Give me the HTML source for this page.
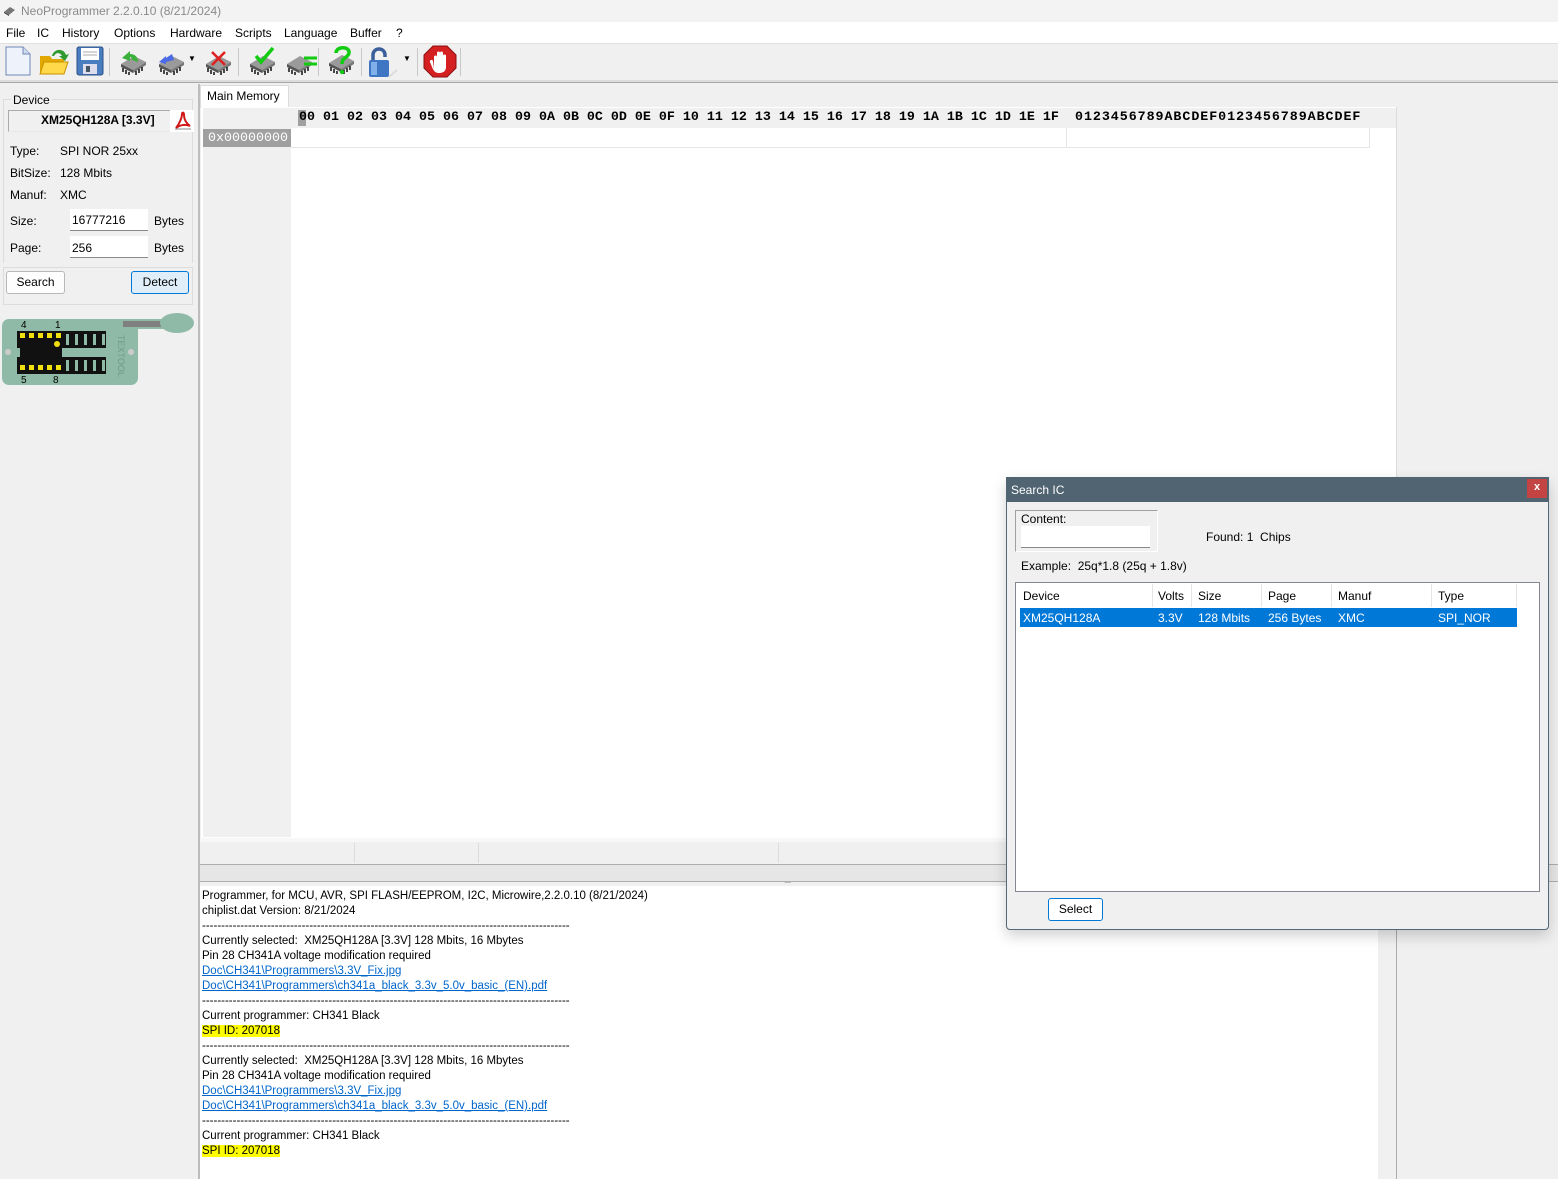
<!DOCTYPE html>
<html><head><meta charset="utf-8">
<style>
*{box-sizing:border-box;margin:0;padding:0}
body{width:1558px;height:1179px;overflow:hidden;background:#f0f0f0;font-family:"Liberation Sans",sans-serif;font-size:12px;color:#000;position:relative}
.a{position:absolute}
.t{position:absolute;white-space:nowrap}
.mono{font-family:"Liberation Mono",monospace;font-weight:bold;font-size:13.33px}
a{color:#0066cc;text-decoration:underline}
.sep{position:absolute;top:48px;width:1px;height:28px;background:#c8c8c8}
.btn{position:absolute;background:#fdfdfd;border:1px solid #b8b8b8;border-radius:3px;text-align:center;line-height:20px}
</style></head><body>
<div class="a" style="left:0;top:0;width:1558px;height:22px;background:#f3f3f3"></div>
<svg class="a" style="left:3px;top:5px" width="13" height="12"><polygon points="1,7 7,2 12,5 6,10" fill="#777"/><polygon points="1,7 6,10 6,11 1,8" fill="#333"/></svg>
<div class="t" style="left:21px;top:4px;color:#8a8a8a;font-size:12px">NeoProgrammer 2.2.0.10 (8/21/2024)</div>
<div class="a" style="left:0;top:22px;width:1558px;height:21px;background:#fff"></div>
<div class="t" style="left:6px;top:26px">File</div>
<div class="t" style="left:37px;top:26px">IC</div>
<div class="t" style="left:62px;top:26px">History</div>
<div class="t" style="left:114px;top:26px">Options</div>
<div class="t" style="left:170px;top:26px">Hardware</div>
<div class="t" style="left:235px;top:26px">Scripts</div>
<div class="t" style="left:284px;top:26px">Language</div>
<div class="t" style="left:350px;top:26px">Buffer</div>
<div class="t" style="left:396px;top:26px">?</div>
<div class="a" style="left:0;top:43px;width:1558px;height:1px;background:#e0e0e0"></div>
<div class="a" style="left:0;top:80px;width:1558px;height:3px;background:#dcdcdc;border-bottom:1px solid #a8a8a8"></div>
<svg class="a" style="left:4px;top:45px" width="28" height="32"><path d="M2,2 H19 L26,9 V30 H2 Z" fill="#eef2fb" stroke="#6f88b6"/><path d="M19,2 V9 H26" fill="#cfd9ee" stroke="#6f88b6"/></svg>
<svg class="a" style="left:38px;top:46px" width="32" height="30"><path d="M2,10 H12 L14,13 H26 V28 H2 Z" fill="#e0a800"/><path d="M2,28 L6,16 H30 L26,28 Z" fill="#ffd94a" stroke="#c99000"/><path d="M14,10 C16,2 26,2 28,9 L31,8 L27,15 L21,10 L24,10 C22,6 18,6 16,10Z" fill="#2f9b2f"/></svg>
<svg class="a" style="left:76px;top:46px" width="28" height="30"><rect x="1" y="1" width="26" height="28" rx="2" fill="#4a7cc0" stroke="#2a4f88"/><rect x="5" y="2" width="18" height="12" fill="#fff"/><line x1="7" y1="6" x2="21" y2="6" stroke="#aaa"/><line x1="7" y1="9" x2="21" y2="9" stroke="#aaa"/><rect x="7" y="18" width="14" height="10" fill="#dde"/><rect x="10" y="20" width="4" height="6" fill="#456"/></svg>
<div class="sep" style="left:109px"></div>
<svg class="a" style="left:118px;top:48px" width="30" height="28"><polygon points="3,16 16,8 28,14 15,22" fill="#9a9a9a"/><polygon points="3,16 15,22 15,25 3,19" fill="#555"/><polygon points="15,22 28,14 28,17 15,25" fill="#777"/><path d="M5,20 v4 M8,22 v4 M11,24 v3 M18,23 v4 M21,21 v4 M24,19 v4" stroke="#111" stroke-width="1.5"/><path d="M4,10 L12,3 L12,6 C18,6 20,10 20,14 L14,12 C14,10 13,9 12,9 L12,13 Z" fill="#3bb03b"/></svg>
<svg class="a" style="left:156px;top:48px" width="30" height="28"><polygon points="3,16 16,8 28,14 15,22" fill="#9a9a9a"/><polygon points="3,16 15,22 15,25 3,19" fill="#555"/><polygon points="15,22 28,14 28,17 15,25" fill="#777"/><path d="M5,20 v4 M8,22 v4 M11,24 v3 M18,23 v4 M21,21 v4 M24,19 v4" stroke="#111" stroke-width="1.5"/><path d="M3,14 L10,8 L10,10 L16,6 L18,12 L10,14 L10,16Z" fill="#4a6ae8"/></svg>
<div class="t" style="left:188px;top:54px;font-size:8px">▼</div>
<svg class="a" style="left:203px;top:48px" width="30" height="28"><polygon points="3,16 16,8 28,14 15,22" fill="#9a9a9a"/><polygon points="3,16 15,22 15,25 3,19" fill="#555"/><polygon points="15,22 28,14 28,17 15,25" fill="#777"/><path d="M5,20 v4 M8,22 v4 M11,24 v3 M18,23 v4 M21,21 v4 M24,19 v4" stroke="#111" stroke-width="1.5"/><path d="M9,4 L22,17 M22,4 L9,17" stroke="#e02020" stroke-width="2.5"/></svg>
<div class="sep" style="left:238px"></div>
<svg class="a" style="left:247px;top:46px" width="30" height="30"><polygon points="3,18 16,10 28,16 15,24" fill="#9a9a9a"/><polygon points="3,18 15,24 15,27 3,21" fill="#555"/><polygon points="15,24 28,16 28,19 15,27" fill="#777"/><path d="M5,22 v4 M8,24 v4 M11,26 v3 M18,25 v4 M21,23 v4 M24,21 v4" stroke="#111" stroke-width="1.5"/><path d="M9,10 L14,16 L26,2" stroke="#11cc11" stroke-width="3.5" fill="none"/></svg>
<svg class="a" style="left:284px;top:48px" width="34" height="28"><polygon points="3,16 16,8 28,14 15,22" fill="#9a9a9a"/><polygon points="3,16 15,22 15,25 3,19" fill="#555"/><polygon points="15,22 28,14 28,17 15,25" fill="#777"/><path d="M5,20 v4 M8,22 v4 M11,24 v3 M18,23 v4 M21,21 v4 M24,19 v4" stroke="#111" stroke-width="1.5"/><path d="M20,10 H33 M20,16 H33" stroke="#11cc11" stroke-width="3"/></svg>
<div class="sep" style="left:318px"></div>
<svg class="a" style="left:326px;top:45px" width="30" height="32"><polygon points="3,18 16,10 28,16 15,24" fill="#9a9a9a"/><polygon points="3,18 15,24 15,27 3,21" fill="#555"/><polygon points="15,24 28,16 28,19 15,27" fill="#777"/><path d="M5,22 v4 M8,24 v4 M11,26 v3 M18,25 v4 M21,23 v4 M24,21 v4" stroke="#111" stroke-width="1.5"/><path d="M10,8 C10,1 24,1 23,8 C22,13 16,12 16,19" stroke="#11cc11" stroke-width="3.5" fill="none"/><circle cx="16" cy="27" r="2.2" fill="#11cc11"/></svg>
<div class="sep" style="left:361px"></div>
<svg class="a" style="left:368px;top:46px" width="30" height="32"><path d="M5,16 V9 C5,1 17,1 17,9 V11" stroke="#3a5f9a" stroke-width="3.5" fill="none"/><rect x="1" y="14" width="20" height="17" rx="2" fill="#3f76c4"/><rect x="3" y="16" width="6" height="13" fill="#7fb0ea"/><path d="M21,31 L29,24" stroke="#ddd" stroke-width="2"/></svg>
<div class="t" style="left:403px;top:54px;font-size:8px">▼</div>
<div class="sep" style="left:417px"></div>
<svg class="a" style="left:423px;top:45px" width="34" height="33"><polygon points="10,1 24,1 33,10 33,23 24,32 10,32 1,23 1,10" fill="#d42020" stroke="#8a1010"/><path d="M11,24 V12 a1.5,1.5 0 0 1 3,0 V17 V8 a1.5,1.5 0 0 1 3,0 V16 V8 a1.5,1.5 0 0 1 3,0 V17 V11 a1.5,1.5 0 0 1 3,0 V22 C23,27 19,28 16,28 C13,28 11,27 9,22 L7,17 a1.5,1.5 0 0 1 3,-1 Z" fill="#fff"/></svg>
<div class="sep" style="left:460px"></div>

<div class="a" style="left:198px;top:84px;width:2px;height:1095px;background:#bdbdbd"></div>
<div class="a" style="left:3px;top:99px;width:190px;height:164px;border:1px solid #dcdcdc;border-bottom:none"></div>
<div class="t" style="left:11px;top:93px;background:#f0f0f0;padding:0 2px">Device</div>
<div class="a" style="left:8px;top:110px;width:185px;height:22px;background:#f0f0f0;border:1px solid #ababab;border-right:none;border-bottom:1px solid #e8e8e8"></div>
<div class="a" style="left:170px;top:110px;width:24px;height:22px;background:#fff"></div>
<svg class="a" style="left:173px;top:111px" width="20" height="20"><path d="M3,17 C7,12 9,6 9,3 C9,1 11,1 11,4 C11,8 13,12 17,15 C12,13 7,14 3,17 Z" fill="none" stroke="#d01818" stroke-width="2"/><line x1="2" y1="18" x2="18" y2="18" stroke="#888"/></svg>
<div class="t" style="left:41px;top:113px;font-weight:bold">XM25QH128A [3.3V]</div>
<div class="t" style="left:10px;top:144px">Type:</div><div class="t" style="left:60px;top:144px">SPI NOR  25xx</div>
<div class="t" style="left:10px;top:166px">BitSize:</div><div class="t" style="left:60px;top:166px">128 Mbits</div>
<div class="t" style="left:10px;top:188px">Manuf:</div><div class="t" style="left:60px;top:188px">XMC</div>
<div class="t" style="left:10px;top:214px">Size:</div>
<div class="a" style="left:70px;top:209px;width:78px;height:22px;background:#fff;border-bottom:1px solid #8a8a8a"></div>
<div class="t" style="left:72px;top:213px">16777216</div><div class="t" style="left:154px;top:214px">Bytes</div>
<div class="t" style="left:10px;top:241px">Page:</div>
<div class="a" style="left:70px;top:236px;width:78px;height:22px;background:#fff;border-bottom:1px solid #8a8a8a"></div>
<div class="t" style="left:72px;top:241px">256</div><div class="t" style="left:154px;top:241px">Bytes</div>
<div class="a" style="left:3px;top:267px;width:190px;height:38px;border:1px solid #dcdcdc"></div>
<div class="btn" style="left:6px;top:271px;width:59px;height:23px">Search</div>
<div class="btn" style="left:131px;top:271px;width:58px;height:23px;background:#e0eef9;border-color:#0078d7">Detect</div>
<svg class="a" style="left:0;top:311px" width="196" height="78">
<rect x="2" y="8" width="136" height="66" rx="7" fill="#8fbaa8"/>
<rect x="120" y="8" width="44" height="10" fill="#8fbaa8"/><rect x="123" y="10" width="40" height="6" fill="#808080"/>
<ellipse cx="177" cy="12" rx="17" ry="10" fill="#8fbaa8"/>
<circle cx="8" cy="41" r="3" fill="#ccc"/><circle cx="131" cy="41" r="3" fill="#ccc"/>
<rect x="17" y="20" width="89" height="17" fill="#111"/><rect x="17" y="46" width="89" height="17" fill="#111"/>
<g fill="#8fbaa8"><rect x="66" y="23" width="3" height="11"/><rect x="75" y="23" width="3" height="11"/><rect x="84" y="23" width="3" height="11"/><rect x="93" y="23" width="3" height="11"/><rect x="102" y="23" width="3" height="11"/><rect x="66" y="49" width="3" height="11"/><rect x="75" y="49" width="3" height="11"/><rect x="84" y="49" width="3" height="11"/><rect x="93" y="49" width="3" height="11"/><rect x="102" y="49" width="3" height="11"/></g>
<rect x="20" y="24" width="42" height="33" fill="#111"/>
<g fill="#f0e010"><rect x="20" y="22" width="5" height="5"/><rect x="29" y="22" width="5" height="5"/><rect x="38" y="22" width="5" height="5"/><rect x="47" y="22" width="5" height="5"/><rect x="56" y="22" width="5" height="5"/><rect x="20" y="54" width="5" height="5"/><rect x="29" y="54" width="5" height="5"/><rect x="38" y="54" width="5" height="5"/><rect x="47" y="54" width="5" height="5"/><rect x="56" y="54" width="5" height="5"/><circle cx="57" cy="33" r="3"/></g>
<text x="21" y="17" font-size="10" font-family="Liberation Sans">4</text><text x="55" y="17" font-size="10" font-family="Liberation Sans">1</text>
<text x="21" y="72" font-size="10" font-family="Liberation Sans">5</text><text x="53" y="72" font-size="10" font-family="Liberation Sans">8</text>
<text x="118" y="24" font-size="9" fill="#6f9a88" transform="rotate(90 118 24)" font-family="Liberation Sans">TEXTOOL</text>
</svg>

<div class="a" style="left:200px;top:85px;width:89px;height:23px;background:#fff;border:1px solid #dcdcdc;border-bottom:none"></div>
<div class="t" style="left:207px;top:89px">Main Memory</div>
<div class="a" style="left:201px;top:107px;width:1196px;height:731px;background:#fff;border-right:1px solid #dcdcdc"></div>
<div class="a" style="left:203px;top:108px;width:88px;height:729px;background:#f0f0f0"></div>
<div class="a" style="left:291px;top:108px;width:1105px;height:20px;background:#f0f0f0"></div>
<div class="a" style="left:298px;top:110px;width:8px;height:16px;background:#a0a0a0"></div>
<div class="t mono" style="left:299px;top:110px">00 01 02 03 04 05 06 07 08 09 0A 0B 0C 0D 0E 0F 10 11 12 13 14 15 16 17 18 19 1A 1B 1C 1D 1E 1F</div>
<div class="t mono" style="left:1075px;top:110px;letter-spacing:0.95px">0123456789ABCDEF0123456789ABCDEF</div>
<div class="a" style="left:203px;top:129px;width:88px;height:18px;background:#a0a0a0"></div>
<div class="t mono" style="left:208px;top:131px;color:#fff;font-weight:normal">0x00000000</div>
<div class="a" style="left:291px;top:128px;width:1079px;height:20px;border-right:1px solid #e6e6e6;border-bottom:1px solid #e6e6e6"></div>
<div class="a" style="left:1066px;top:128px;width:1px;height:20px;background:#e6e6e6"></div>
<div class="a" style="left:200px;top:838px;width:1197px;height:4px;background:#f7f7f7"></div>
<div class="a" style="left:200px;top:842px;width:1358px;height:22px;background:#f0f0f0"></div>
<div class="a" style="left:354px;top:843px;width:1px;height:20px;background:#dcdcdc"></div>
<div class="a" style="left:478px;top:843px;width:1px;height:20px;background:#dcdcdc"></div>
<div class="a" style="left:778px;top:843px;width:1px;height:20px;background:#dcdcdc"></div>
<div class="a" style="left:200px;top:864px;width:1358px;height:18px;background:#e6e6e6;border-top:1px solid #adadad;border-bottom:1px solid #adadad"></div>
<div class="t" style="left:784px;top:878px;font-size:7px;color:#999;letter-spacing:-1px">.......</div>
<div class="a" style="left:200px;top:886px;width:1178px;height:293px;background:#fff"></div>
<div class="a" style="left:1396px;top:886px;width:1px;height:293px;background:#adadad"></div>
<div class="a" style="left:202px;top:889px;line-height:15px;white-space:nowrap;font-size:11.5px">
Programmer, for MCU, AVR, SPI FLASH/EEPROM, I2C, Microwire,2.2.0.10 (8/21/2024)<br>
chiplist.dat Version: 8/21/2024<br>
------------------------------------------------------------------------------------------------<br>
Currently selected:&nbsp; XM25QH128A [3.3V] 128 Mbits, 16 Mbytes<br>
Pin 28 CH341A voltage modification required<br>
<a>Doc\CH341\Programmers\3.3V_Fix.jpg</a><br>
<a>Doc\CH341\Programmers\ch341a_black_3.3v_5.0v_basic_(EN).pdf</a><br>
------------------------------------------------------------------------------------------------<br>
Current programmer: CH341 Black<br>
<span style="background:#ffff00">SPI ID: 207018</span><br>
------------------------------------------------------------------------------------------------<br>
Currently selected:&nbsp; XM25QH128A [3.3V] 128 Mbits, 16 Mbytes<br>
Pin 28 CH341A voltage modification required<br>
<a>Doc\CH341\Programmers\3.3V_Fix.jpg</a><br>
<a>Doc\CH341\Programmers\ch341a_black_3.3v_5.0v_basic_(EN).pdf</a><br>
------------------------------------------------------------------------------------------------<br>
Current programmer: CH341 Black<br>
<span style="background:#ffff00">SPI ID: 207018</span>
</div>

<div class="a" style="left:1006px;top:477px;width:543px;height:453px;background:#f0f0f0;border:1px solid #536878;border-radius:0 0 4px 4px;box-shadow:0 6px 14px rgba(0,0,0,0.18)"></div>
<div class="a" style="left:1006px;top:477px;width:543px;height:25px;background:#506472"></div>
<div class="t" style="left:1011px;top:483px;color:#fff">Search IC</div>
<div class="a" style="left:1527px;top:479px;width:20px;height:19px;background:#c44444;color:#fff;text-align:center;line-height:17px;font-size:11px;font-weight:bold">x</div>
<div class="a" style="left:1015px;top:510px;width:143px;height:42px;border:1px solid #a0a0a0;border-right-color:#fff;border-bottom-color:#fff"></div>
<div class="t" style="left:1021px;top:512px">Content:</div>
<div class="a" style="left:1021px;top:526px;width:129px;height:22px;background:#fff;border-bottom:1px solid #888"></div>
<div class="t" style="left:1206px;top:530px">Found: 1&nbsp; Chips</div>
<div class="t" style="left:1021px;top:559px">Example:&nbsp; 25q*1.8 (25q + 1.8v)</div>
<div class="a" style="left:1015px;top:582px;width:525px;height:310px;background:#fff;border:1px solid #828790"></div>
<div class="a" style="left:1152px;top:584px;width:1px;height:23px;background:#e5e5e5"></div>
<div class="a" style="left:1191px;top:584px;width:1px;height:23px;background:#e5e5e5"></div>
<div class="a" style="left:1261px;top:584px;width:1px;height:23px;background:#e5e5e5"></div>
<div class="a" style="left:1331px;top:584px;width:1px;height:23px;background:#e5e5e5"></div>
<div class="a" style="left:1431px;top:584px;width:1px;height:23px;background:#e5e5e5"></div>
<div class="a" style="left:1516px;top:584px;width:1px;height:23px;background:#e5e5e5"></div>
<div class="t" style="left:1023px;top:589px">Device</div><div class="t" style="left:1158px;top:589px">Volts</div><div class="t" style="left:1198px;top:589px">Size</div><div class="t" style="left:1268px;top:589px">Page</div><div class="t" style="left:1338px;top:589px">Manuf</div><div class="t" style="left:1438px;top:589px">Type</div>
<div class="a" style="left:1020px;top:608px;width:497px;height:19px;background:#0078d7"></div>
<div class="t" style="left:1023px;top:611px;color:#fff">XM25QH128A</div><div class="t" style="left:1158px;top:611px;color:#fff">3.3V</div><div class="t" style="left:1198px;top:611px;color:#fff">128 Mbits</div><div class="t" style="left:1268px;top:611px;color:#fff">256 Bytes</div><div class="t" style="left:1338px;top:611px;color:#fff">XMC</div><div class="t" style="left:1438px;top:611px;color:#fff">SPI_NOR</div>
<div class="btn" style="left:1048px;top:898px;width:55px;height:23px;border-color:#0078d7;background:#fff">Select</div>
</body></html>
